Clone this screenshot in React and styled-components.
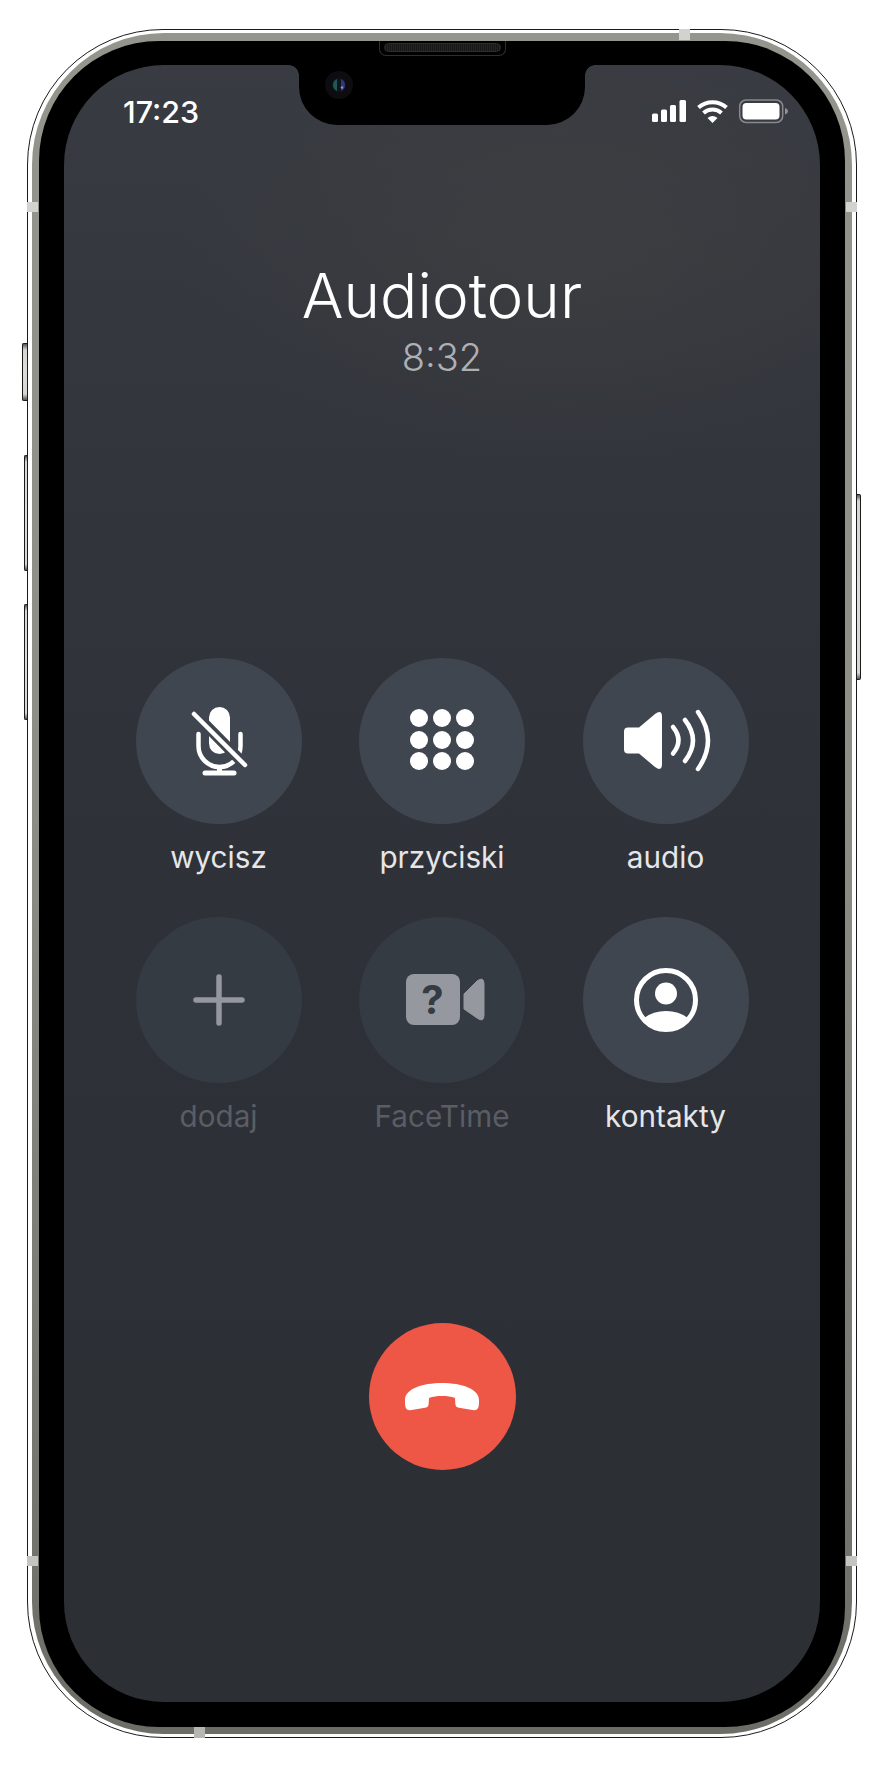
import React from 'react'
import styled, { createGlobalStyle } from 'styled-components'

const Global = createGlobalStyle`
  html, body {
    margin: 0;
    background: #fff;
  }
  * {
    box-sizing: border-box;
  }
`

const FONT = `Inter, "Noto Sans", "Liberation Sans", sans-serif`

const Page = styled.div`
  width: 884px;
  height: 1768px;
  padding: 29px 27px 30px;
  font-family: ${FONT};
`

const Frame = styled.div`
  position: relative;
  height: 1709px;
  border: 1px solid #1b1b1b;
  border-radius: 136px;
  background: #fff;
  padding: 3px 4px;
`

const Band = styled.div`
  height: 100%;
  border-radius: 132px;
  padding: 8px 7px 7px;
  background: linear-gradient(180deg, #94958d 0%, #8c8d85 45%, #6c6d67 100%);
`

const Bezel = styled.div`
  height: 100%;
  border-radius: 120px;
  background: #000;
  padding: 24px 25px 25px;
`

const Screen = styled.div`
  position: relative;
  height: 100%;
  overflow: hidden;
  border-radius: 100px;
  background:
    radial-gradient(ellipse 380px 220px at 66% 11%, rgba(70, 68, 66, 0.45), rgba(70, 68, 66, 0) 100%),
    linear-gradient(180deg, #383b42 0%, #33363d 20%, #2f3239 42%, #2d3037 65%, #2c2f34 85%, #2c2f33 100%);
  display: flex;
  flex-direction: column;
  align-items: center;
`

const SideKey = styled.div`
  position: absolute;
  top: ${p => p.$top}px;
  height: ${p => p.$height}px;
  width: ${p => p.$width}px;
  ${p => (p.$right ? 'right' : 'left')}: ${p => -p.$width - 1}px;
  border: 1px solid #1b1b1b;
  border-${p => (p.$right ? 'left' : 'right')}: none;
  border-radius: ${p => (p.$right ? '0 2px 2px 0' : '2px 0 0 2px')};
  background: linear-gradient(180deg, #555 0, #d6d6d2 6px, #dcdcd8 50%, #d6d6d2 calc(100% - 6px), #555 100%);
`

const Antenna = styled.div`
  position: absolute;
  background: ${p => p.$color || '#d2d2ce'};
`

const AntennaSide = styled(Antenna)`
  top: ${p => p.$top}px;
  ${p => (p.$right ? 'right' : 'left')}: -1px;
  width: 11px;
  height: 10px;
`

const AntennaEdge = styled(Antenna)`
  left: ${p => p.$left}px;
  ${p => (p.$bottom ? 'bottom' : 'top')}: -1px;
  width: 11px;
  height: 11px;
`

const Speaker = styled.div`
  position: absolute;
  top: 11px;
  left: 351px;
  width: 127px;
  height: 15px;
  border: 1px solid #2e2e2e;
  border-top: none;
  border-radius: 0 0 7px 7px;
  background: #000;
  padding: 2px 4px 0;
`

const SpeakerMesh = styled.div`
  height: 9px;
  border-radius: 4.5px;
  border: 1px solid #2c2c2c;
  background: repeating-linear-gradient(90deg, #262626 0 1px, #161616 1px 2px);
`

const Notch = styled.div`
  position: absolute;
  top: 0;
  left: 235px;
  width: 286px;
  height: 60px;
  background: #000;
  border-radius: 0 0 38px 38px;
  &::before,
  &::after {
    content: '';
    position: absolute;
    top: 0;
    width: 10px;
    height: 10px;
  }
  &::before {
    left: -10px;
    background: radial-gradient(circle at 0 100%, transparent 9.5px, #000 10px);
  }
  &::after {
    right: -10px;
    background: radial-gradient(circle at 100% 100%, transparent 9.5px, #000 10px);
  }
`

const Camera = styled.svg`
  position: absolute;
  top: 6px;
  left: 26px;
  width: 28px;
  height: 28px;
`

const StatusBar = styled.div`
  width: 100%;
  height: 94px;
  flex: none;
  padding: 0 32px 0 59px;
  display: flex;
  align-items: center;
  justify-content: space-between;
`

const Clock = styled.div`
  font-size: 30.5px;
  font-weight: 520;
  line-height: 34px;
  color: #fff;
`

const StatusIcons = styled.svg`
  width: 136px;
  height: 26px;
  display: block;
`

const Title = styled.div`
  margin-top: 100px;
  font-size: 62px;
  font-weight: 320;
  line-height: 74px;
  color: #fff;
`

const Duration = styled.div`
  margin-top: 2px;
  font-size: 38px;
  font-weight: 340;
  line-height: 44px;
  color: #aeb0b3;
`

const Keys = styled.div`
  margin-top: 279px;
  display: grid;
  grid-template-columns: repeat(3, 166px);
  grid-auto-rows: 259px;
  column-gap: 57.5px;
  justify-content: center;
`

const Key = styled.div`
  display: flex;
  flex-direction: column;
  align-items: center;
`

const Circle = styled.div`
  width: 166px;
  height: 166px;
  border-radius: 50%;
  background: ${p => (p.$dim ? '#353b43' : '#40464f')};
`

const Glyph = styled.svg`
  width: 100%;
  height: 100%;
  display: block;
`

const Label = styled.div`
  margin-top: 16px;
  font-size: 29.7px;
  font-weight: 370;
  line-height: 34px;
  white-space: nowrap;
  color: ${p => (p.$dim ? '#5a5e64' : '#e6e6e8')};
`

const HangUp = styled.div`
  margin-top: 147px;
  width: 147px;
  height: 147px;
  border-radius: 50%;
  background: #ee5646;
`

function MicOff() {
  return (
    <Glyph viewBox="0 0 166 166">
      <rect x="73" y="49" width="21" height="47" rx="10.5" fill="#fff" />
      <path d="M62.5 76 V88 A21 21 0 0 0 104.500 88 V76" fill="none" stroke="#fff" strokeWidth="4.5" strokeLinecap="round" />
      <path d="M83.500 109 V114" stroke="#fff" strokeWidth="5" />
      <path d="M69 115 H98" stroke="#fff" strokeWidth="5" strokeLinecap="round" />
      <path d="M54 51 L113 111" stroke="#40464f" strokeWidth="11" />
      <path d="M58 56 L109 107" stroke="#fff" strokeWidth="4.5" strokeLinecap="round" />
    </Glyph>
  )
}

function Keypad() {
  const xs = [60, 83, 106]
  const ys = [60, 82, 103]
  return (
    <Glyph viewBox="0 0 166 166">
      {ys.map(y => xs.map(x => <circle key={[x, y].join('_')} cx={x} cy={y} r="9" fill="#fff" />))}
    </Glyph>
  )
}

function Loudspeaker() {
  return (
    <Glyph viewBox="0 0 166 166">
      <path d="M45 69.500 H56 L72 56 Q79 51 79 59 V106 Q79 114 72 109 L56 95.500 H45 Q41 95.500 41 91.500 V73.500 Q41 69.500 45 69.500 Z" fill="#fff" />
      <g fill="none" stroke="#fff" strokeWidth="4.5" strokeLinecap="round">
        <path d="M90 69 Q101 82.500 90 95.500" />
        <path d="M102 62 Q118 82.500 102 103" />
        <path d="M115 54 Q135 82.500 115 111" />
      </g>
    </Glyph>
  )
}

function Plus() {
  return (
    <Glyph viewBox="0 0 166 166">
      <path d="M60 83 H106 M83 60 V106" stroke="#94979d" strokeWidth="5.5" strokeLinecap="round" />
    </Glyph>
  )
}

function VideoUnknown() {
  return (
    <Glyph viewBox="0 0 166 166">
      <rect x="47" y="57" width="54" height="51" rx="8" fill="#95989e" />
      <path d="M105 77 L118 64 Q125 59 125 67 V98 Q125 106 118 101 L105 92 Z" fill="#95989e" stroke="#95989e" strokeWidth="1" strokeLinejoin="round" />
      <text x="73.500" y="97" textAnchor="middle" fontFamily={FONT} fontSize="40" fontWeight="700" fill="#353b43">?</text>
    </Glyph>
  )
}

function Contact() {
  return (
    <Glyph viewBox="0 0 166 166">
      <clipPath id="contact-clip"><circle cx="83" cy="83" r="30" /></clipPath>
      <circle cx="83" cy="83" r="29.500" fill="none" stroke="#fff" strokeWidth="5" />
      <circle cx="83" cy="76.500" r="11" fill="#fff" />
      <ellipse cx="83" cy="118" rx="31" ry="24" fill="#fff" clipPath="url(#contact-clip)" />
    </Glyph>
  )
}

function Handset() {
  return (
    <Glyph viewBox="0 0 147 147">
      <path
        d="M36 77 C36 66 53 60 73 60 C93 60 110 66 110 77 C110 83 110 87 105 87.300 L90 84.800 C87 84.300 86.300 82.500 86.300 80 L86 75 C82 73.500 78 73 73 73 C68 73 64 73.500 60 75 L59.700 80 C59.700 82.500 59 84.300 56 84.800 L41 87.300 C36 87 36 83 36 77 Z"
        fill="#fff"
      />
    </Glyph>
  )
}

const KEYS = [
  { label: 'wycisz', icon: <MicOff /> },
  { label: 'przyciski', icon: <Keypad /> },
  { label: 'audio', icon: <Loudspeaker /> },
  { label: 'dodaj', icon: <Plus />, dim: true },
  { label: 'FaceTime', icon: <VideoUnknown />, dim: true },
  { label: 'kontakty', icon: <Contact /> },
]

export default function App() {
  return (
    <Page>
      <Global />
      <Frame>
        <SideKey $top={313} $height={58} $width={5} />
        <SideKey $top={425} $height={116} $width={3} />
        <SideKey $top={574} $height={116} $width={3} />
        <SideKey $right $top={464} $height={186} $width={4} />
        <Band>
          <Bezel>
            <Screen>
              <StatusBar>
                <Clock>17:23</Clock>
                <StatusIcons viewBox="0 0 136 26">
                  <g fill="#fff">
                    <rect x="0" y="14.500" width="6" height="8.500" rx="1.500" />
                    <rect x="9" y="10.500" width="6" height="12.500" rx="1.500" />
                    <rect x="18" y="6" width="6" height="17" rx="1.500" />
                    <rect x="27.500" y="1" width="6.500" height="22" rx="1.500" />
                  </g>
                  <g fill="none" stroke="#fff" strokeWidth="4">
                    <path d="M46.500 8.500 A21 21 0 0 1 74.500 8.500" />
                    <path d="M51.500 14 A13.500 13.500 0 0 1 69.500 14" />
                  </g>
                  <path d="M55.500 19 A8 8 0 0 1 65.500 19 L60.500 24 Z" fill="#fff" />
                  <rect x="87.700" y="1" width="43" height="22.500" rx="6.500" fill="none" stroke="#fff" strokeOpacity="0.4" strokeWidth="1.500" />
                  <rect x="90.500" y="4" width="37" height="16.500" rx="4" fill="#fff" />
                  <path d="M133 9 Q136 10 136 12.300 Q136 14.500 133 15.500 Z" fill="#fff" fillOpacity="0.45" />
                </StatusIcons>
              </StatusBar>
              <Notch>
                <Camera viewBox="0 0 28 28">
                  <circle cx="14" cy="14" r="14" fill="#0d0d11" />
                  <circle cx="14" cy="14" r="7" fill="#11131f" />
                  <path d="M12 8 A6.500 6.500 0 0 0 12 20 Z" fill="#1d5a55" />
                  <path d="M16 8 A6.500 6.500 0 0 1 16 20 Z" fill="#2c3a78" />
                  <circle cx="17" cy="16.500" r="1.300" fill="#a884c4" />
                </Camera>
              </Notch>
              <Title>Audiotour</Title>
              <Duration>8:32</Duration>
              <Keys>
                {KEYS.map(k => (
                  <Key key={k.label}>
                    <Circle $dim={k.dim}>{k.icon}</Circle>
                    <Label $dim={k.dim}>{k.label}</Label>
                  </Key>
                ))}
              </Keys>
              <HangUp>
                <Handset />
              </HangUp>
            </Screen>
          </Bezel>
        </Band>
        <Speaker><SpeakerMesh /></Speaker>
        <AntennaSide $top={172} />
        <AntennaSide $right $top={172} />
        <AntennaSide $top={1526} $color="#c4c5c0" />
        <AntennaSide $right $top={1526} $color="#c4c5c0" />
        <AntennaEdge $left={651} />
        <AntennaEdge $bottom $left={166} $color="#b6b7b2" />
      </Frame>
    </Page>
  )
}
